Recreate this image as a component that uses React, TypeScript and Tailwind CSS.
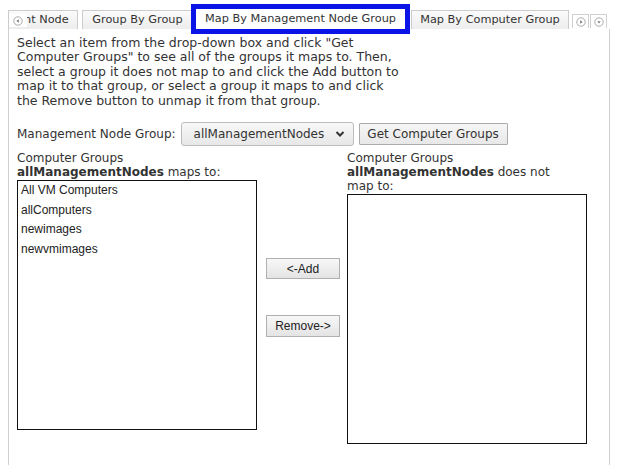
import React from "react";

function ScrollIcon({ dir }: { dir: "left" | "right" | "down" }) {
  const tri =
    dir === "left"
      ? "M5.8 3.3 L3.4 5 L5.8 6.7Z"
      : dir === "right"
      ? "M4.2 3.3 L6.6 5 L4.2 6.7Z"
      : "M3.3 4.2 L6.7 4.2 L5 6.6Z";
  return (
    <svg width="10" height="10" viewBox="0 0 10 10">
      <circle cx="5" cy="5" r="4.2" fill="#fff" stroke="#a0a0a0" strokeWidth="0.9" />
      <path d={tri} fill="#7a7a7a" />
    </svg>
  );
}

const tab =
  "h-[19px] mt-[10px] border border-b-0 border-[#cccccc] bg-gradient-to-b from-[#fbfbfb] to-[#ededed] flex items-center justify-center whitespace-nowrap";

const groupsIn = ["All VM Computers", "allComputers", "newimages", "newvmimages"];

export default function App() {
  return (
    <div className="w-[620px] h-[465px] overflow-hidden bg-white font-['DejaVu_Sans',sans-serif] text-[#333]">
      {/* tab strip */}
      <div className="relative z-10 flex h-[29px] text-[11.3px]">
        <div className={`${tab} relative ml-[8px] w-[70px] !justify-start`}>
          <span className="absolute left-0 top-[3px] w-[18px] h-[13px] bg-white flex items-center justify-center">
            <ScrollIcon dir="left" />
          </span>
          <span className="pl-[15px]">nt Node</span>
        </div>
        <div className={`${tab} ml-[4px] w-[111px]`}>Group By Group</div>
        <div className="ml-[3px] mt-[9px] h-[20px] w-[209px] bg-white flex items-center justify-center whitespace-nowrap outline-[5px] outline-solid outline-[#0a14e6]">
          Map By Management Node Group
        </div>
        <div className={`${tab} ml-[6px] w-[158px]`}>Map By Computer Group</div>
        <div className="ml-[3px] mt-[14px] w-[17px] h-[14px] border border-b-0 border-[#d0d0d0] flex items-center justify-center">
          <ScrollIcon dir="right" />
        </div>
        <div className="ml-[1px] mt-[14px] w-[17px] h-[14px] border border-b-0 border-[#d0d0d0] flex items-center justify-center">
          <ScrollIcon dir="down" />
        </div>
      </div>

      {/* pane */}
      <div className="ml-[8px] w-[602px] h-[436px] border-x border-[#cfcfcf] pt-[7px] pl-[8px] text-[12px]">
        <p className="text-[12.5px] leading-[14.4px] whitespace-nowrap">
          Select an item from the drop-down box and click "Get
          <br />
          Computer Groups" to see all of the groups it maps to. Then,
          <br />
          select a group it does not map to and click the Add button to
          <br />
          map it to that group, or select a group it maps to and click
          <br />
          the Remove button to unmap it from that group.
        </p>

        <div className="mt-[14px] flex items-center">
          <span>Management Node Group:</span>
          <div className="ml-[5px] w-[173px] h-[24px] rounded-[3px] border border-[#bcbcbc] bg-gradient-to-b from-[#f8f8f8] to-[#e7e7e7] flex items-center pl-[12px] pr-[8px]">
            <span className="flex-1">allManagementNodes</span>
            <svg width="10" height="8" viewBox="0 0 10 8">
              <path d="M1.5 2 L5 5.5 L8.5 2" fill="none" stroke="#333" strokeWidth="2" />
            </svg>
          </div>
          <button className="ml-[5px] w-[149px] h-[22px] border border-[#ababab] rounded-[1px] bg-gradient-to-b from-[#f6f6f6] to-[#e8e8e8] text-[12px] text-[#333]">
            Get Computer Groups
          </button>
        </div>

        <div className="mt-[5px] flex">
          <div className="w-[240px]">
            <div className="leading-[14px]">
              Computer Groups
              <br />
              <b>allManagementNodes</b> maps to:
            </div>
            <div className="mt-[1px] h-[250px] border border-[#111] bg-white font-['Liberation_Sans',Arial,sans-serif] text-[12px] text-[#222]">
              {groupsIn.map((g) => (
                <div key={g} className="pl-[3px] leading-[19.5px]">
                  {g}
                </div>
              ))}
            </div>
          </div>

          <div className="ml-[9px] w-[74px] flex flex-col justify-center gap-[36px] font-['Liberation_Sans',Arial,sans-serif] text-[12px] text-[#222]">
            <button className="h-[21px] w-[74px] border border-[#b0b0b0] bg-gradient-to-b from-[#f7f7f7] to-[#e4e4e4]">
              &lt;-Add
            </button>
            <button className="h-[22px] w-[74px] border border-[#b0b0b0] bg-gradient-to-b from-[#f7f7f7] to-[#e4e4e4]">
              Remove-&gt;
            </button>
          </div>

          <div className="ml-[7px] w-[240px]">
            <div className="leading-[14px]">
              Computer Groups
              <br />
              <b>allManagementNodes</b> does not
              <br />
              map to:
            </div>
            <div className="mt-[1px] h-[250px] border border-[#111] bg-white" />
          </div>
        </div>
      </div>
    </div>
  );
}
